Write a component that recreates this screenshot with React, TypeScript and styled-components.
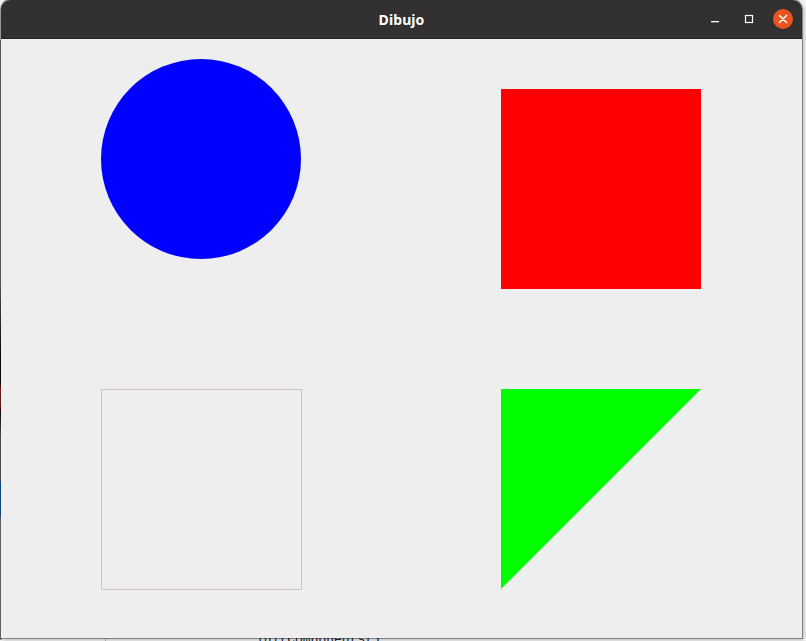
import React from "react";
import styled, { createGlobalStyle } from "styled-components";

const Global = createGlobalStyle`
  html, body { margin: 0; padding: 0; }
  body { width: 806px; height: 641px; overflow: hidden; font-family: "Noto Sans", "DejaVu Sans", sans-serif; }
`;

const Desktop = styled.div`
  position: relative;
  width: 806px;
  height: 641px;
  background: #f4f4f4;
  overflow: hidden;
`;

const EditorGutter = styled.div`
  position: absolute;
  left: 105px;
  top: 0;
  bottom: 0;
  width: 1px;
  background: #b8b8b8;
`;

const CodeLine = styled.div<{ $top: number; $left: number; $color: string }>`
  position: absolute;
  top: ${(p) => p.$top}px;
  left: ${(p) => p.$left}px;
  font-family: "Liberation Mono", monospace;
  font-size: 13px;
  line-height: 16px;
  color: ${(p) => p.$color};
  white-space: pre;
`;

const LeftStrip = styled.div`
  position: absolute;
  left: 0;
  top: 40px;
  width: 2px;
  height: 600px;
  background: linear-gradient(
    to bottom,
    #888 0%, #888 40%, #111 52%, #111 57%, #9a2a2a 58%, #9a2a2a 61%, #111 62%, #777 66%, #777 73%, #1a6fc4 74%, #1a6fc4 79%, #999 80%, #999 100%
  );
`;

const Window = styled.div`
  position: absolute;
  left: 1px;
  top: 0;
  width: 801px;
  height: 638px;
  display: flex;
  flex-direction: column;
  border-radius: 9px 9px 0 0;
  overflow: hidden;
  box-shadow: 0 0 0 1px rgba(0, 0, 0, 0.35), 2px 2px 4px rgba(0, 0, 0, 0.25);
  background: #eeeeee;
`;

const TitleBar = styled.div`
  position: relative;
  height: 38px;
  flex: none;
  background: #323030;
  display: flex;
  align-items: center;
  justify-content: center;
  border-bottom: 1px solid #222;
`;

const Title = styled.span`
  color: #ffffff;
  font-family: "Noto Sans", "DejaVu Sans", sans-serif;
  font-weight: 700;
  font-size: 14px;
  letter-spacing: 0.1px;
`;

const Controls = styled.div`
  position: absolute;
  right: 2px;
  top: 0;
  height: 38px;
  display: flex;
  align-items: center;
`;

const CtrlButton = styled.div`
  width: 34px;
  height: 38px;
  display: flex;
  align-items: center;
  justify-content: center;
`;

const CloseCircle = styled.div`
  width: 20px;
  height: 20px;
  border-radius: 50%;
  background: #e95420;
  display: flex;
  align-items: center;
  justify-content: center;
`;

const Canvas = styled.div`
  flex: 1;
  background: #eeeeee;
`;

export default function App() {
  return (
    <>
      <Global />
      <Desktop>
        <EditorGutter />
        <CodeLine $top={-12} $left={182} $color="#2a5db0">ooooooo</CodeLine>
        <CodeLine $top={632} $left={256} $color="#222">initComponents();</CodeLine>
        <LeftStrip />
        <Window>
          <TitleBar>
            <Title>Dibujo</Title>
            <Controls>
              <CtrlButton>
                <svg width="10" height="10" viewBox="0 0 10 10">
                  <rect x="1" y="7" width="8" height="1.3" fill="#fff" />
                </svg>
              </CtrlButton>
              <CtrlButton>
                <svg width="10" height="10" viewBox="0 0 10 10">
                  <rect x="1.5" y="1.5" width="7" height="7" fill="none" stroke="#fff" strokeWidth="1.2" />
                </svg>
              </CtrlButton>
              <CtrlButton>
                <CloseCircle>
                  <svg width="10" height="10" viewBox="0 0 10 10">
                    <path d="M1.5 1.5 L8.5 8.5 M8.5 1.5 L1.5 8.5" stroke="#fff" strokeWidth="1.5" strokeLinecap="round" />
                  </svg>
                </CloseCircle>
              </CtrlButton>
            </Controls>
          </TitleBar>
          <Canvas>
            <svg width="801" height="599" viewBox="0 0 801 599">
              <circle cx="200" cy="120" r="100" fill="#0000ff" />
              <rect x="500" y="50" width="200" height="200" fill="#ff0000" />
              <rect x="100.5" y="350.5" width="200" height="200" fill="none" stroke="#d8c0c0" strokeWidth="1" />
              <polygon points="500,350 700,350 500,550" fill="#00ff00" />
            </svg>
          </Canvas>
        </Window>
      </Desktop>
    </>
  );
}
